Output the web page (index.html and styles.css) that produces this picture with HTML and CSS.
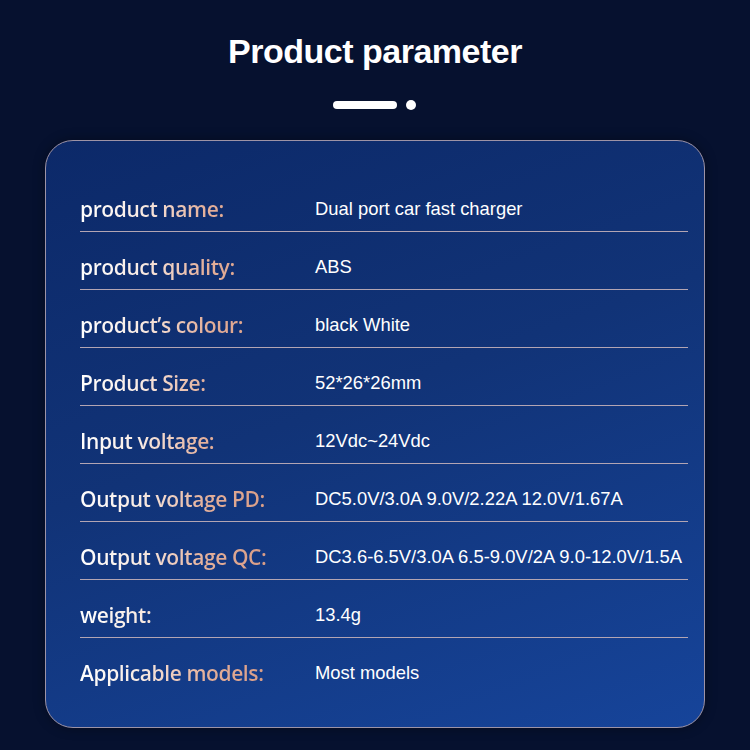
FILE: index.html
```html
<!DOCTYPE html>
<html lang="en">
<head>
    <meta charset="UTF-8">
    <meta name="viewport" content="width=device-width, initial-scale=1.0">
    <title>Product parameter</title>
    <link rel="stylesheet" href="styles.css">
</head>
<body>
    <h1 class="title">Product parameter</h1>
    <div class="marker">
        <span class="marker-bar"></span>
        <span class="marker-dot"></span>
    </div>

    <div class="param-card">
        <div class="param-row">
            <span class="param-label">product name:</span>
            <span class="param-value">Dual port car fast charger</span>
        </div>
        <div class="param-row">
            <span class="param-label">product quality:</span>
            <span class="param-value">ABS</span>
        </div>
        <div class="param-row">
            <span class="param-label">product’s colour:</span>
            <span class="param-value">black White</span>
        </div>
        <div class="param-row">
            <span class="param-label">Product Size:</span>
            <span class="param-value">52*26*26mm</span>
        </div>
        <div class="param-row">
            <span class="param-label">Input voltage:</span>
            <span class="param-value">12Vdc~24Vdc</span>
        </div>
        <div class="param-row">
            <span class="param-label">Output voltage PD:</span>
            <span class="param-value">DC5.0V/3.0A 9.0V/2.22A 12.0V/1.67A</span>
        </div>
        <div class="param-row">
            <span class="param-label">Output voltage QC:</span>
            <span class="param-value">DC3.6-6.5V/3.0A 6.5-9.0V/2A 9.0-12.0V/1.5A</span>
        </div>
        <div class="param-row">
            <span class="param-label">weight:</span>
            <span class="param-value">13.4g</span>
        </div>
        <div class="param-row">
            <span class="param-label">Applicable models:</span>
            <span class="param-value">Most models</span>
        </div>
    </div>
</body>
</html>
```

FILE: styles.css
```css
body {
    margin: 0;
    padding: 0;
    height: 750px;
    overflow: hidden;
    background-color: #06112f;
    font-family: "Liberation Sans", Arial, sans-serif;
    display: flex;
    flex-direction: column;
    align-items: center;
}

/* Titulo principal */
.title {
    margin: 31px 0 0 0;
    color: #fff;
    font-size: 34px;
    font-weight: bold;
    line-height: 40px;
    letter-spacing: -0.5px;
}

/* Barra e ponto abaixo do titulo */
.marker {
    display: flex;
    align-items: center;
    gap: 9px;
    margin-top: 29px;
    margin-left: -2px;
}

.marker-bar {
    width: 64px;
    height: 8px;
    border-radius: 4px;
    background-color: #fff;
}

.marker-dot {
    width: 10px;
    height: 10px;
    border-radius: 50%;
    background-color: #fff;
}

/* Cartao com a tabela de parametros */
.param-card {
    box-sizing: border-box;
    width: 660px;
    margin-top: 30px;
    padding: 33px 16px 31px 34px;
    border: 1px solid #9d93a6;
    border-radius: 28px;
    background: linear-gradient(160deg, #0c2969 0%, #113377 45%, #16449a 100%);
    box-shadow: 0 0 12px rgba(0, 0, 0, 0.35);
}

.param-row {
    display: flex;
    align-items: center;
    height: 58px;
    padding-top: 12px;
    box-sizing: border-box;
    border-bottom: 1px solid #b3a5b3;
}

.param-row:last-child {
    border-bottom: none;
}

/* Texto do rotulo: branco a esquerda, rosado a direita */
.param-label {
    display: inline-block;
    min-width: 235px;
    font-family: "Open Sans", "Noto Sans", sans-serif;
    font-size: 21px;
    font-weight: 600;
    letter-spacing: -0.4px;
    background: linear-gradient(90deg, #ffffff 0px, #f8ebe4 60px, #e4b09b 125px, #d99c85 190px);
    -webkit-background-clip: text;
    background-clip: text;
    -webkit-text-fill-color: transparent;
}

.param-value {
    color: #fff;
    font-size: 18.4px;
}
```
